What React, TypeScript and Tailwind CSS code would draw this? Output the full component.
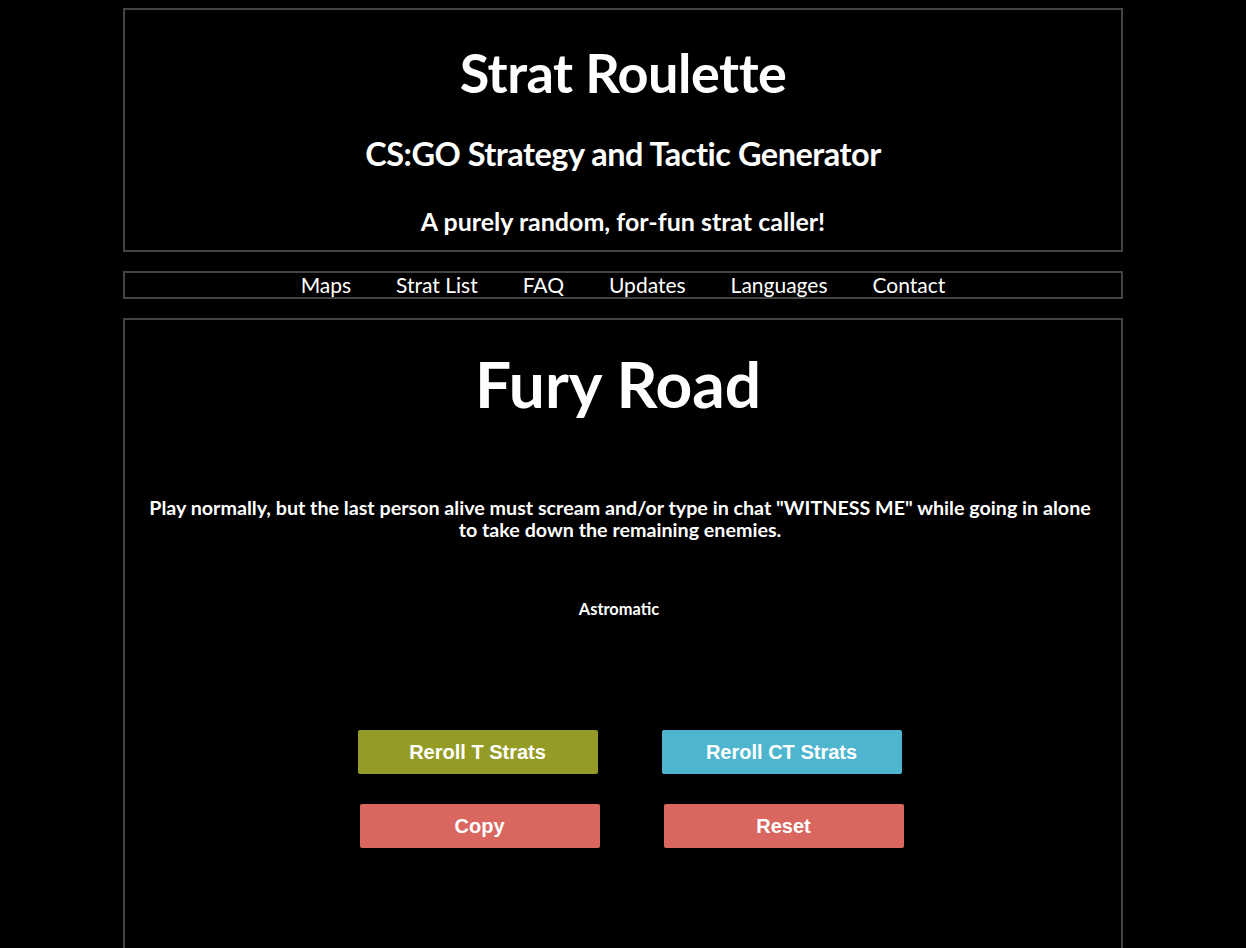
import React from "react";

const navItems = ["Maps", "Strat List", "FAQ", "Updates", "Languages", "Contact"];

export default function App() {
  return (
    <div className="min-h-screen bg-black text-white font-['Lato','Open_Sans',sans-serif] pt-2">
      <header className="w-[1000px] h-[244px] mx-auto border-2 border-[#444] flex flex-col items-center text-center">
        <h1 className="text-[54px] leading-[64px] font-bold mt-[31px] tracking-[-0.5px]">Strat Roulette</h1>
        <h2 className="text-[32.5px] leading-[38px] font-bold mt-[30px] tracking-[-0.5px]">CS:GO Strategy and Tactic Generator</h2>
        <h3 className="text-[25px] leading-[30px] font-bold mt-[33px]">A purely random, for-fun strat caller!</h3>
      </header>

      <nav className="w-[1000px] h-[28px] mx-auto mt-[19px] border-2 border-[#444] flex justify-center items-center gap-[45px] text-[21px] leading-[24px] font-normal">
        {navItems.map((item) => (
          <a key={item} href="#" className="text-white">
            {item}
          </a>
        ))}
      </nav>

      <main className="w-[1000px] h-[640px] mx-auto mt-[19px] border-2 border-[#444] border-b-0 flex flex-col items-center text-center px-5">
        <h1 className="text-[64px] leading-[72px] font-bold mt-[28px] pr-[10px]">Fury Road</h1>
        <p className="text-[19.7px] leading-[22px] font-bold mt-[77px] whitespace-nowrap pr-[6px]">
          Play normally, but the last person alive must scream and/or type in chat "WITNESS ME" while going in alone
          <br />
          to take down the remaining enemies.
        </p>
        <p className="text-[16.4px] leading-[20px] font-bold mt-[58px] pr-[8px]">Astromatic</p>

        <div className="w-full flex flex-col mt-[111px] gap-[30px] font-['Liberation_Sans',Arial,sans-serif]">
          <div className="flex justify-center gap-[64px] pl-[13px]">
            <button className="w-[240px] h-[44px] rounded-[2px] bg-[#959c26] text-[20px] font-bold text-white">
              Reroll T Strats
            </button>
            <button className="w-[240px] h-[44px] rounded-[2px] bg-[#4db6ce] text-[20px] font-bold text-white">
              Reroll CT Strats
            </button>
          </div>
          <div className="flex justify-center gap-[64px] pl-[17px]">
            <button className="w-[240px] h-[44px] rounded-[2px] bg-[#d9665f] text-[20px] font-bold text-white">
              Copy
            </button>
            <button className="w-[240px] h-[44px] rounded-[2px] bg-[#d9665f] text-[20px] font-bold text-white">
              Reset
            </button>
          </div>
        </div>
      </main>
    </div>
  );
}
